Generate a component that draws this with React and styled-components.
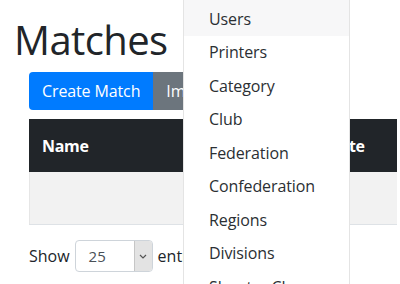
import React from "react";
import styled, { createGlobalStyle } from "styled-components";

const Global = createGlobalStyle`
  html, body { margin: 0; padding: 0; background: #fff; }
  body {
    font-family: "Open Sans", "Noto Sans", sans-serif;
    color: #212529;
    width: 400px;
    height: 284px;
    overflow: hidden;
  }
`;

const Page = styled.div`
  position: relative;
  padding: 16px 3px 0 29px;
  height: 284px;
  box-sizing: border-box;
  overflow: hidden;
`;

const Title = styled.h1`
  margin: 0 0 8px -15px;
  font-size: 40px;
  font-weight: 400;
  line-height: 48px;
  color: #212529;
  letter-spacing: -0.6px;
`;

const BtnGroup = styled.div`
  display: flex;
  height: 38px;
`;

const Btn = styled.button`
  font-family: inherit;
  font-size: 16px;
  line-height: 24px;
  height: 38px;
  padding: 0 13px;
  border: none;
  color: #fff;
  background: ${p => (p.$variant === "secondary" ? "#6c757d" : "#007bff")};
  border-radius: ${p => (p.$first ? "4px 0 0 4px" : "0 4px 4px 0")};
  letter-spacing: -0.12px;
`;

const Table = styled.div`
  margin-top: 9px;
  width: 368px;
  border-bottom: 1px solid #dee2e6;
`;

const HeadRow = styled.div`
  display: grid;
  grid-template-columns: 286px 1fr;
  height: 53px;
  align-items: center;
  background: #212529;
  color: #fff;
  font-weight: 700;
  font-size: 16px;
`;

const HeadCell = styled.div`
  padding: 0 13px;
  letter-spacing: -0.3px;
`;

const BodyRow = styled.div`
  height: 52px;
  background: #f2f2f2;
  border-left: 1px solid #e6e6e6;
`;

const Footer = styled.div`
  display: flex;
  align-items: center;
  gap: 5px;
  margin-top: 15px;
  font-size: 16px;
  color: #212529;
`;

const Select = styled.div`
  display: flex;
  width: 78px;
  height: 32px;
  box-sizing: border-box;
  border: 1px solid #ced4da;
  border-radius: 4px;
  overflow: hidden;
  background: #fff;
`;

const SelectValue = styled.span`
  flex: 1;
  display: flex;
  align-items: center;
  padding-left: 13px;
  font-size: 15px;
  color: #495057;
`;

const SelectArrow = styled.span`
  width: 17px;
  display: flex;
  align-items: center;
  justify-content: center;
  background: #e3e3e3;
  border-left: 1px solid #c6c6c6;
`;

const Menu = styled.div`
  position: absolute;
  left: 183px;
  top: 0;
  width: 167px;
  height: 300px;
  box-sizing: border-box;
  background: #fff;
  border-left: 1px solid #e4e4e4;
  border-right: 1px solid #e4e4e4;
`;

const MenuItem = styled.div`
  height: 33.5px;
  display: flex;
  align-items: center;
  padding-left: 25px;
  font-size: 16px;
  color: #2b2f33;
  background: ${p => (p.$active ? "#f7f7f8" : "transparent")};
  letter-spacing: -0.1px;
  &:first-child {
    height: 35.5px;
    padding-top: 2px;
    box-sizing: border-box;
  }
`;

const items = [
  "Users",
  "Printers",
  "Category",
  "Club",
  "Federation",
  "Confederation",
  "Regions",
  "Divisions",
  "Shooter Classes",
];

export default function App() {
  return (
    <>
      <Global />
      <Page>
        <Title>Matches</Title>
        <BtnGroup>
          <Btn $first>Create Match</Btn>
          <Btn $variant="secondary">Import</Btn>
        </BtnGroup>
        <Table>
          <HeadRow>
            <HeadCell>Name</HeadCell>
            <HeadCell>Date</HeadCell>
          </HeadRow>
          <BodyRow />
        </Table>
        <Footer>
          <span>Show</span>
          <Select>
            <SelectValue>25</SelectValue>
            <SelectArrow>
              <svg width="8" height="5" viewBox="0 0 8 5">
                <path d="M1 1l3 3 3-3" fill="none" stroke="#555" strokeWidth="1.2" />
              </svg>
            </SelectArrow>
          </Select>
          <span>entries</span>
        </Footer>
        <Menu>
          {items.map((t, i) => (
            <MenuItem key={t} $active={i === 0}>
              {t}
            </MenuItem>
          ))}
        </Menu>
      </Page>
    </>
  );
}
